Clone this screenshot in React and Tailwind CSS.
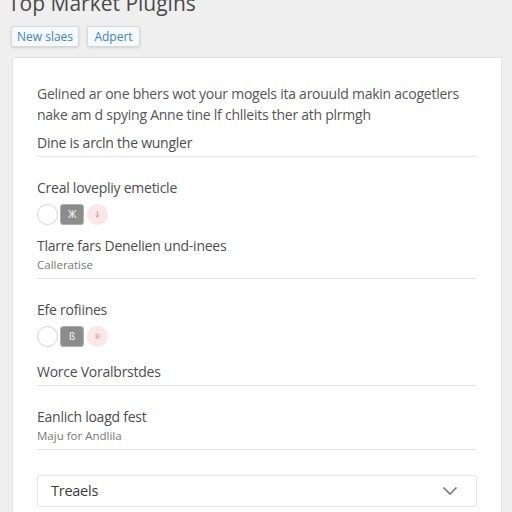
import React from "react";

const Toggle = ({ a, b }) => (
    <div className="flex items-center h-[22px] mt-[5px]">
        <span className="w-[21px] h-[21px] rounded-full border border-[#d4d4d4] bg-white"></span>
        <span className="ml-[2px] w-[24px] h-[21px] rounded-[3px] bg-[#8c8c8c] border border-[#b0b0b0] flex items-center justify-center text-[10px] text-white">
            {a}
        </span>
        <span className="ml-[3px] w-[21px] h-[21px] rounded-full bg-[#fbe6ea] flex items-center justify-center text-[9px] text-[#d88a9a]">
            {b}
        </span>
    </div>
);

const App = () => {
    return (
        <div
            className="w-[512px] h-[512px] overflow-hidden bg-[#efefef] text-[#4d4d4d]"
            style={{ fontFamily: '"Open Sans", "Liberation Sans", sans-serif' }}
        >
            <h1 className="ml-[8px] mt-[-11px] text-[21px] leading-[28px] text-[#4a4a4a]">Top Market Plugins</h1>

            <div className="flex gap-[8px] ml-[11px] mt-[9px]">
                <button className="h-[21px] w-[68px] rounded-[2px] border border-[#d6d9db] bg-[#f6f8f9] shadow-sm text-[12px] text-[#3d86b8] leading-none">
                    New slaes
                </button>
                <button className="h-[21px] w-[53px] rounded-[2px] border border-[#d6d9db] bg-[#f6f8f9] shadow-sm text-[12px] text-[#3d86b8] leading-none">
                    Adpert
                </button>
            </div>

            <div className="ml-[12px] mt-[10px] w-[490px] h-[500px] bg-white border border-[#e2e2e2] px-[24px] pt-[25px] text-[14px] tracking-[-0.25px]">
                <p className="leading-[21px] text-[#555]">
                    Gelined ar one bhers wot your mogels ita arouuld makin acogetlers nake am d spying Anne tine lf chlleits ther ath plrmgh
                </p>
                <div className="mt-[7px] pb-[3px] border-b border-[#e6e6e6] leading-[21px]">
                    Dine is arcln the wungler
                </div>

                <div className="mt-[20px] leading-[21px]">Creal lovepliy emeticle</div>
                <Toggle a="Ж" b="ↆ" />
                <div className="mt-[10px] leading-[21px]">Tlarre fars Denelien und-inees</div>
                <div className="mt-[1px] pb-[5px] border-b border-[#e6e6e6] text-[11.5px] tracking-normal leading-[16px] text-[#777]">
                    Calleratise
                </div>

                <div className="mt-[20px] leading-[21px]">Efe rofiines</div>
                <Toggle a="ß" b="ʚ" />
                <div className="mt-[14px] pb-[3px] border-b border-[#e6e6e6] leading-[21px]">
                    Worce Voralbrstdes
                </div>

                <div className="mt-[20px] leading-[21px]">Eanlich loagd fest</div>
                <div className="mt-[1px] pb-[5px] border-b border-[#e6e6e6] text-[11.5px] tracking-normal leading-[16px] text-[#777]">
                    Maju for Andlila
                </div>

                <div className="mt-[25px] h-[32px] border border-[#e6e6e6] rounded-[2px] flex items-center justify-between pl-[13px] pr-[18px]">
                    <span className="text-[14.5px] text-[#3a3a3a]">Treaels</span>
                    <svg width="16" height="10" viewBox="0 0 16 10" fill="none">
                        <path d="M1.5 1.5 L8 8 L14.5 1.5" stroke="#777" strokeWidth="1.6" />
                    </svg>
                </div>
            </div>
        </div>
    );
};

export default App;
